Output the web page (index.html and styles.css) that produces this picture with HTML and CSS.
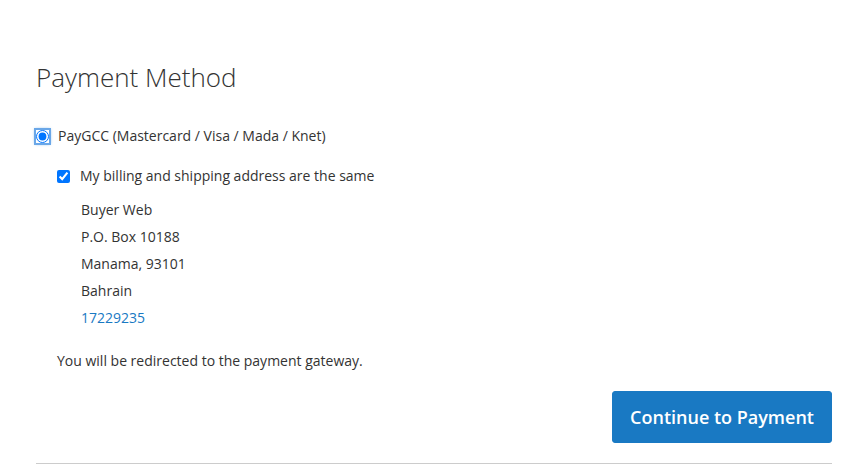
FILE: index.html
```html
<!DOCTYPE html>
<html>
<head>
<meta charset="utf-8">
<link rel="stylesheet" href="styles.css">
</head>
<body>
<div class="checkout">
  <h2 class="title">Payment Method</h2>
  <div class="method">
    <label class="choice radio-choice">
      <input type="radio" name="pm" class="radio" checked>
      <span>PayGCC (Mastercard / Visa / Mada / Knet)</span>
    </label>
    <div class="method-body">
      <label class="choice check-choice">
        <input type="checkbox" class="check" checked>
        <span>My billing and shipping address are the same</span>
      </label>
      <div class="address">
        <div>Buyer Web</div>
        <div>P.O. Box 10188</div>
        <div>Manama, 93101</div>
        <div>Bahrain</div>
        <div><a href="#" class="phone">17229235</a></div>
      </div>
      <p class="note">You will be redirected to the payment gateway.</p>
    </div>
    <div class="actions">
      <button class="primary">Continue to Payment</button>
    </div>
  </div>
  <div class="divider"></div>
</div>
</body>
</html>
```
FILE: styles.css
```css
html, body {
  margin: 0;
  padding: 0;
  background: #fff;
}
body {
  font-family: "Open Sans", "Liberation Sans", sans-serif;
  font-size: 14px;
  color: #333;
}
.checkout {
  width: 796px;
  margin-left: 36px;
  padding-top: 58px;
}
.title {
  margin: 0;
  font-size: 26px;
  font-weight: 300;
  line-height: 38px;
  color: #333;
}
.method {
  margin-top: 30px;
}
.choice {
  display: flex;
  align-items: center;
  gap: 9px;
  line-height: 20px;
}
.check-choice {
  gap: 10px;
}
.radio {
  margin: 0;
  width: 13px;
  height: 13px;
  accent-color: #0075ff;
  outline: 2px solid #6aa7e8;
  outline-offset: 0;
  box-shadow: 0 0 3px 1px #68a8e0;
}
.method-body {
  padding-left: 21px;
  margin-top: 20px;
}
.check {
  margin: 0;
  width: 13px;
  height: 13px;
  accent-color: #0075ff;
}
.address {
  margin-top: 10px;
  padding-left: 24px;
  line-height: 27px;
}
.phone {
  color: #1979c3;
  text-decoration: none;
}
.note {
  margin: 20px 0 0 0;
  line-height: 20px;
}
.actions {
  display: flex;
  justify-content: flex-end;
  margin-top: 20px;
}
.primary {
  background: #1979c3;
  color: #fff;
  border: 1px solid #1979c3;
  border-radius: 3px;
  font-family: "Open Sans", "Liberation Sans", sans-serif;
  font-size: 18px;
  font-weight: 600;
  width: 220px;
  height: 52px;
  padding: 0;
  cursor: pointer;
}
.divider {
  margin-top: 20px;
  border-top: 1px solid #ccc;
}
```
